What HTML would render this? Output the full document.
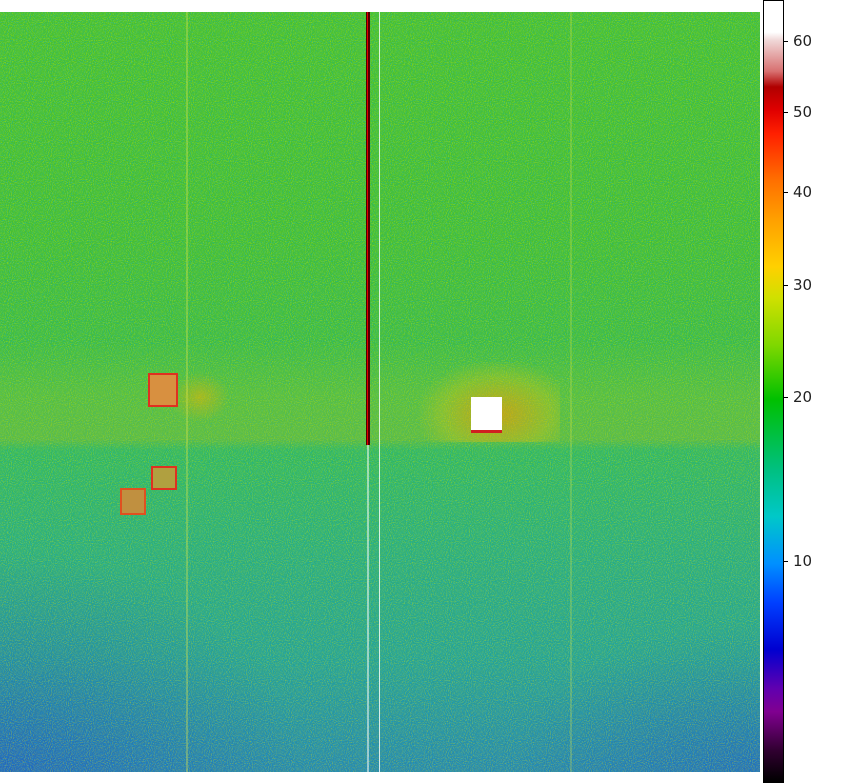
<!DOCTYPE html>
<html><head><style>
body{margin:0;width:868px;height:783px;background:#fff;position:relative;overflow:hidden;font-family:"DejaVu Sans","Liberation Sans",sans-serif}
#img{position:absolute;left:0;top:12px;width:760px;height:760px;
background:radial-gradient(ellipse 300px 220px at 0% 100%,rgba(30,60,210,0.45),rgba(0,0,0,0)),radial-gradient(ellipse 250px 150px at 100% 100%,rgba(30,60,210,0.35),rgba(0,0,0,0)),
linear-gradient(to bottom,rgba(0,0,0,0) 0%,rgba(0,0,0,0) 60%,rgba(20,80,200,0.12) 85%,rgba(30,60,210,0.25) 100%),
linear-gradient(to bottom,#48c030 0%,#44be34 30%,#40bc40 44%,#36b85a 57%,#30b472 70%,#2cae88 85%,#2ca0a0 100%);overflow:hidden}
.a{position:absolute}
#cb{position:absolute;left:763px;top:0;width:19px;height:781px;border:1px solid #000;
background:linear-gradient(to bottom,#fff 0%,#fff 4%,#f0d8d8 5%,#d87070 9%,#b00000 11%,#e00000 14%,#ff2000 17%,#ff7000 23%,#ffa000 28%,#ffd000 34%,#d0e000 38%,#80d800 44%,#00c000 51%,#00c080 60%,#00c8c8 66%,#0090ff 72%,#0040ff 77%,#0000d0 83%,#6000b0 88%,#800090 91%,#300030 96%,#000 100%)}
.t{position:absolute;left:783px;width:5px;height:1px;background:#000}
.l{position:absolute;left:793px;font-size:15px;color:#222;line-height:16px}
</style></head><body>
<div id="img">
<svg class="a" style="left:0;top:0" width="760" height="760">
<filter id="n"><feTurbulence type="fractalNoise" baseFrequency="0.95" numOctaves="1" seed="3"/><feColorMatrix values="0 0 0 0 0.9  0 0 0 0 0.95  0 0 0 0 0  2 0 0 0 -0.9"/></filter>
<filter id="m"><feTurbulence type="fractalNoise" baseFrequency="0.95" numOctaves="1" seed="7"/><feColorMatrix values="0 0 0 0 0  0 0 0 0 0.4  0 0 0 0 1  0 2 0 0 -0.95"/></filter>
<rect width="760" height="760" filter="url(#n)" opacity="0.6"/>
<rect width="760" height="760" filter="url(#m)" opacity="0.7"/>
</svg>
<div class="a" style="left:0;top:330px;width:760px;height:108px;background:linear-gradient(to bottom,rgba(200,210,0,0),rgba(200,210,0,0.2) 50%,rgba(200,200,0,0.25) 90%,rgba(0,0,0,0))"></div>
<div class="a" style="left:420px;top:350px;width:140px;height:80px;background:radial-gradient(ellipse at 55% 65%,rgba(255,150,0,0.6),rgba(255,200,0,0.25) 50%,rgba(0,0,0,0) 75%)"></div>
<div class="a" style="left:170px;top:360px;width:60px;height:50px;background:radial-gradient(ellipse,rgba(240,180,0,0.5),rgba(0,0,0,0) 70%)"></div>
<div class="a" style="left:186px;top:0;width:2px;height:760px;background:rgba(220,230,80,0.35)"></div>
<div class="a" style="left:570px;top:0;width:2px;height:760px;background:rgba(220,230,80,0.25)"></div>
<div class="a" style="left:366px;top:0;width:4px;height:433px;background:#500000"></div>
<div class="a" style="left:367px;top:0;width:1px;height:433px;background:#e00000"></div>
<div class="a" style="left:379px;top:0;width:1px;height:760px;background:rgba(255,255,255,0.8)"></div>
<div class="a" style="left:367px;top:433px;width:2px;height:327px;background:rgba(255,255,255,0.5)"></div>
<div class="a" style="left:471px;top:385px;width:31px;height:33px;background:#fff;border-bottom:3px solid #d02020"></div>
<div class="a" style="left:148px;top:361px;width:30px;height:34px;background:#d89040;border:2px solid #e03020;box-sizing:border-box"></div>
<div class="a" style="left:151px;top:454px;width:26px;height:24px;background:#b0a040;border:2px solid #e03020;box-sizing:border-box"></div>
<div class="a" style="left:120px;top:476px;width:26px;height:27px;background:#c09040;border:2px solid #e05020;box-sizing:border-box"></div>
</div>
<div id="cb"></div>
<div class="t" style="top:41px"></div><div class="l" style="top:33px">60</div>
<div class="t" style="top:112px"></div><div class="l" style="top:104px">50</div>
<div class="t" style="top:192px"></div><div class="l" style="top:184px">40</div>
<div class="t" style="top:285px"></div><div class="l" style="top:277px">30</div>
<div class="t" style="top:397px"></div><div class="l" style="top:389px">20</div>
<div class="t" style="top:561px"></div><div class="l" style="top:553px">10</div>
</body></html>
